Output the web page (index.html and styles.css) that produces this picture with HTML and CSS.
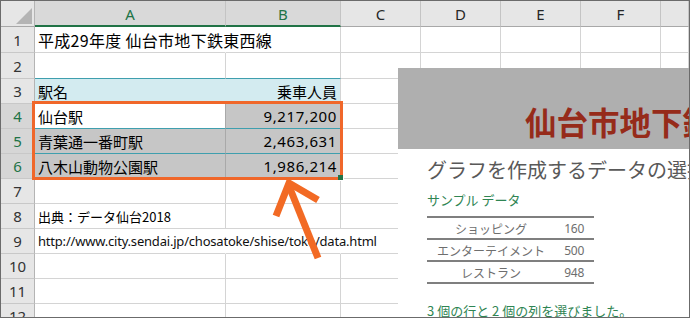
FILE: index.html
```html
<!DOCTYPE html>
<html lang="ja">
<head>
<meta charset="utf-8">
<title>仙台市地下鉄東西線</title>
<link rel="stylesheet" href="styles.css">
</head>
<body>
<div class="frame">
  <div class="sheet">
    <!-- header row -->
    <div class="hd corner"><span class="tri"></span></div>
    <div class="hd col sel">A</div>
    <div class="hd col sel">B</div>
    <div class="hd col">C</div>
    <div class="hd col">D</div>
    <div class="hd col">E</div>
    <div class="hd col">F</div>
    <div class="hd col last"></div>

    <!-- row 1 -->
    <div class="rh">1</div>
    <div class="c nr over title">平成29年度 仙台市地下鉄東西線</div>
    <div class="c"></div><div class="c"></div><div class="c"></div><div class="c"></div><div class="c"></div><div class="c"></div>

    <!-- row 2 -->
    <div class="rh">2</div>
    <div class="c tb"></div><div class="c tb"></div>
    <div class="c"></div><div class="c"></div><div class="c"></div><div class="c"></div><div class="c"></div>

    <!-- row 3 -->
    <div class="rh">3</div>
    <div class="c th nrc">駅名</div>
    <div class="c th num">乗車人員</div>
    <div class="c"></div><div class="c"></div><div class="c"></div><div class="c"></div><div class="c"></div>

    <!-- row 4 -->
    <div class="rh rsel">4</div>
    <div class="c tb sa">仙台駅</div>
    <div class="c tb shade num">9,217,200</div>
    <div class="c"></div><div class="c"></div><div class="c"></div><div class="c"></div><div class="c"></div>

    <!-- row 5 -->
    <div class="rh rsel">5</div>
    <div class="c tb shade sa">青葉通一番町駅</div>
    <div class="c tb shade num">2,463,631</div>
    <div class="c"></div><div class="c"></div><div class="c"></div><div class="c"></div><div class="c"></div>

    <!-- row 6 -->
    <div class="rh rsel">6</div>
    <div class="c shade sa">八木山動物公園駅</div>
    <div class="c shade num">1,986,214</div>
    <div class="c"></div><div class="c"></div><div class="c"></div><div class="c"></div><div class="c"></div>

    <!-- row 7 -->
    <div class="rh">7</div>
    <div class="c"></div><div class="c"></div><div class="c"></div><div class="c"></div><div class="c"></div><div class="c"></div><div class="c"></div>

    <!-- row 8 -->
    <div class="rh">8</div>
    <div class="c small">出典：データ仙台2018</div>
    <div class="c"></div><div class="c"></div><div class="c"></div><div class="c"></div><div class="c"></div><div class="c"></div>

    <!-- row 9 -->
    <div class="rh">9</div>
    <div class="c nr over url">http://www.city.sendai.jp/chosatoke/shise/toke/data.html</div>
    <div class="c nr"></div>
    <div class="c"></div><div class="c"></div><div class="c"></div><div class="c"></div><div class="c"></div>

    <!-- row 10 -->
    <div class="rh">10</div>
    <div class="c"></div><div class="c"></div><div class="c"></div><div class="c"></div><div class="c"></div><div class="c"></div><div class="c"></div>

    <!-- row 11 -->
    <div class="rh">11</div>
    <div class="c"></div><div class="c"></div><div class="c"></div><div class="c"></div><div class="c"></div><div class="c"></div><div class="c"></div>

    <!-- row 12 -->
    <div class="rh">12</div>
    <div class="c"></div><div class="c"></div><div class="c"></div><div class="c"></div><div class="c"></div><div class="c"></div><div class="c"></div>
  </div>

  <div class="selection"></div>
  <div class="handle"></div>

  <div class="panel">
    <div class="panel-head">仙台市地下鉄東西線 乗車人員</div>
    <div class="panel-body">
      <div class="panel-sub">グラフを作成するデータの選択</div>
      <div class="panel-label">サンプル データ</div>
      <div class="sample">
        <div class="srow"><span class="sname">ショッピング</span><span class="sval">160</span></div>
        <div class="srow"><span class="sname">エンターテイメント</span><span class="sval">500</span></div>
        <div class="srow"><span class="sname">レストラン</span><span class="sval">948</span></div>
      </div>
      <div class="panel-note">3 個の行と 2 個の列を選びました。</div>
    </div>
  </div>

  <svg class="arrow" width="688" height="316" viewBox="1 1 688 316" xmlns="http://www.w3.org/2000/svg">
    <path d="M318 258 L289 186" fill="none" stroke="#f26a24" stroke-width="7"/>
    <path d="M276 216 L289 183 L318 200" fill="none" stroke="#f26a24" stroke-width="7" stroke-linejoin="miter"/>
  </svg>
</div>
</body>
</html>
```

FILE: styles.css
```css
html, body {
  margin: 0;
  padding: 0;
  background: #ffffff;
}

.frame {
  position: relative;
  width: 690px;
  height: 318px;
  box-sizing: border-box;
  border: 1px solid #6b6b6b;
  overflow: hidden;
  font-family: "Noto Sans CJK JP", "Noto Sans", sans-serif;
  color: #000;
  background: #fff;
}

.sheet {
  display: grid;
  grid-template-columns: 34px 191px 115px 80px 80px 80px 80px 28px;
  grid-template-rows: 26px 26px 26px 25px 25px 25px 25px 25px 25px 25px 25px 25px 25px;
}

/* header cells */
.hd {
  box-sizing: border-box;
  background: #e6e6e6;
  border-right: 1px solid #c4c4c4;
  border-bottom: 1px solid #a8a8a8;
  display: flex;
  align-items: center;
  justify-content: center;
  font-family: "Noto Sans", "Liberation Sans", sans-serif;
  font-size: 15px;
  color: #262626;
}
.hd.col {
  padding-top: 1px;
}
.hd.sel {
  background: #d9d9d9;
  color: #217346;
  border-bottom: 2px solid #217346;
}
.corner {
  position: relative;
  border-right-color: #b4b4b4;
}
.tri {
  position: absolute;
  right: 2px;
  bottom: 2px;
  width: 0;
  height: 0;
  border-left: 16px solid transparent;
  border-bottom: 16px solid #b4b4b4;
}

/* row headers */
.rh {
  box-sizing: border-box;
  background: #e6e6e6;
  border-right: 1px solid #b4b4b4;
  border-bottom: 1px solid #c8c8c8;
  display: flex;
  align-items: center;
  justify-content: center;
  font-family: "Noto Sans", "Liberation Sans", sans-serif;
  font-size: 15px;
  color: #333;
}
.rh.rsel {
  background: #d6d6d6;
  color: #217346;
}

/* cells */
.c {
  box-sizing: border-box;
  border-right: 1px solid #d4d4d4;
  border-bottom: 1px solid #d4d4d4;
  display: flex;
  align-items: center;
  padding: 0 3px;
  white-space: nowrap;
  font-size: 15px;
  min-width: 0;
}
.c.over {
  position: relative;
  z-index: 1;
  overflow: visible;
}
.c.nr {
  border-right-color: #fff;
}
.c.title {
  font-size: 16px;
  letter-spacing: 0.3px;
}
.c.tb {
  border-bottom-color: #3f9fae;
}
.c.th {
  background: #d3ebf0;
}
.c.nrc {
  border-right-color: #d3ebf0;
}
.c.shade {
  background: #c6c6c6;
}
.c.sa {
  border-right-color: #a9a9a9;
}
.c.num {
  justify-content: flex-end;
}
.c.num:not(.th) {
  font-family: "Noto Sans", sans-serif;
  letter-spacing: 0.6px;
}
.c.small {
  font-size: 13px;
}
.c.url {
  font-family: "Noto Sans", sans-serif;
  font-size: 13px;
  letter-spacing: -0.2px;
  color: #101010;
}

/* selection overlay */
.selection {
  position: absolute;
  left: 31px;
  top: 100px;
  width: 311px;
  height: 79px;
  box-sizing: border-box;
  border: 3px solid #f0672a;
  z-index: 2;
}
.handle {
  position: absolute;
  left: 337px;
  top: 174px;
  width: 5px;
  height: 5px;
  background: #217346;
  border: 1px solid #fff;
  border-top: none;
  border-left: none;
  z-index: 3;
}

/* chart panel overlay */
.panel {
  position: absolute;
  left: 397px;
  top: 67px;
  width: 291px;
  bottom: 0;
  background: #fff;
  overflow: hidden;
  z-index: 4;
}
.panel-head {
  height: 81px;
  box-sizing: border-box;
  background: #afafaf;
  padding: 37px 0 0 127px;
  font-size: 31.5px;
  line-height: 32px;
  font-weight: 700;
  color: #962b1a;
  white-space: nowrap;
}
.panel-body {
  padding-left: 29px;
}
.panel-sub {
  margin-top: 11px;
  font-size: 20px;
  line-height: 20px;
  color: #595959;
  white-space: nowrap;
}
.panel-label {
  margin-top: 13px;
  font-size: 13px;
  line-height: 14px;
  color: #2f8553;
}
.sample {
  margin-top: 9px;
  width: 167px;
  border-bottom: 2px solid #7f7f7f;
}
.srow {
  display: flex;
  align-items: center;
  height: 22px;
  box-sizing: border-box;
  border-top: 2px solid #7f7f7f;
  font-size: 12px;
  color: #6e6e6e;
}
.sname {
  width: 128px;
  text-align: center;
  white-space: nowrap;
}
.sval {
  flex: 1;
  text-align: right;
  padding-right: 10px;
  font-family: "Noto Sans", sans-serif;
  font-size: 12px;
  letter-spacing: -0.3px;
}
.panel-note {
  margin-top: 20px;
  font-size: 13px;
  line-height: 14px;
  color: #2f8553;
  white-space: nowrap;
}

.arrow {
  position: absolute;
  left: 0;
  top: 0;
  pointer-events: none;
  z-index: 5;
}
```
